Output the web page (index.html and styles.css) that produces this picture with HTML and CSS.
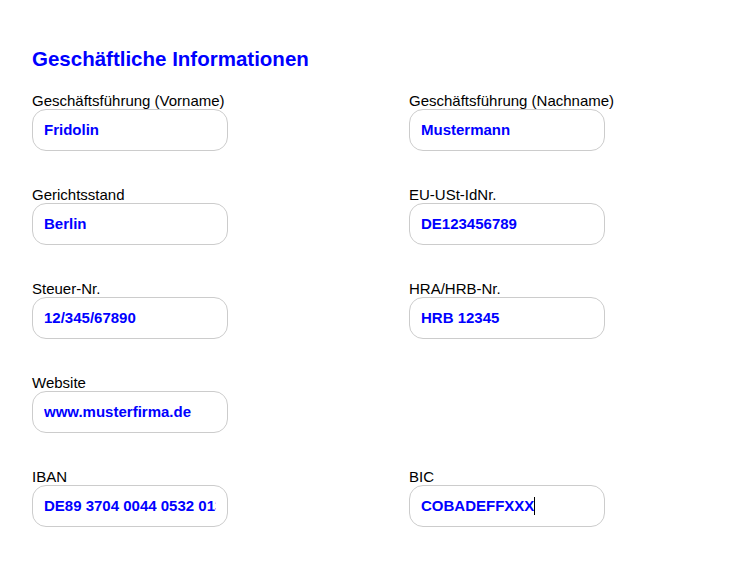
FILE: index.html
```html
<!DOCTYPE html>
<html lang="de">
<head>
<meta charset="utf-8">
<title>Geschäftliche Informationen</title>
<link rel="stylesheet" href="styles.css">
</head>
<body>
<section class="panel">
  <h2 class="title">Geschäftliche Informationen</h2>
  <div class="grid">
    <div class="item">
      <label class="label">Geschäftsführung (Vorname)</label>
      <div class="field"><span class="value">Fridolin</span></div>
    </div>
    <div class="item">
      <label class="label">Geschäftsführung (Nachname)</label>
      <div class="field"><span class="value">Mustermann</span></div>
    </div>
    <div class="item">
      <label class="label">Gerichtsstand</label>
      <div class="field"><span class="value">Berlin</span></div>
    </div>
    <div class="item">
      <label class="label">EU-USt-IdNr.</label>
      <div class="field"><span class="value">DE123456789</span></div>
    </div>
    <div class="item">
      <label class="label">Steuer-Nr.</label>
      <div class="field"><span class="value">12/345/67890</span></div>
    </div>
    <div class="item">
      <label class="label">HRA/HRB-Nr.</label>
      <div class="field"><span class="value">HRB 12345</span></div>
    </div>
    <div class="item">
      <label class="label">Website</label>
      <div class="field"><span class="value">www.musterfirma.de</span></div>
    </div>
    <div class="item empty"></div>
    <div class="item">
      <label class="label">IBAN</label>
      <div class="field"><span class="value">DE89 3704 0044 0532 0130 00</span></div>
    </div>
    <div class="item">
      <label class="label">BIC</label>
      <div class="field"><span class="value">COBADEFFXXX<span class="caret"></span></span></div>
    </div>
  </div>
</section>
</body>
</html>
```
FILE: styles.css
```css
html, body {
  margin: 0;
  padding: 0;
  background: #ffffff;
}

body {
  font-family: "Liberation Sans", Arial, sans-serif;
  color: #000000;
}

.panel {
  padding: 47px 32px 0 32px;
}

.title {
  margin: 0 0 23px 0;
  font-size: 20.5px;
  line-height: 23px;
  font-weight: bold;
  color: #0000ff;
}

.grid {
  display: grid;
  grid-template-columns: 377px 1fr;
  row-gap: 36px;
}

.item {
  display: flex;
  flex-direction: column;
}

.label {
  font-size: 15px;
  line-height: 16px;
  height: 16px;
  white-space: nowrap;
}

.field {
  box-sizing: border-box;
  width: 196px;
  height: 42px;
  border: 1px solid #cccccc;
  border-radius: 14px;
  padding: 0 11px;
  display: flex;
  align-items: center;
}

.value {
  display: flex;
  align-items: center;
  width: 100%;
  font-size: 15px;
  line-height: 18px;
  font-weight: bold;
  color: #0000ff;
  white-space: pre;
  overflow: hidden;
}

.caret {
  display: inline-block;
  width: 1px;
  height: 18px;
  background: #000000;
}
```
